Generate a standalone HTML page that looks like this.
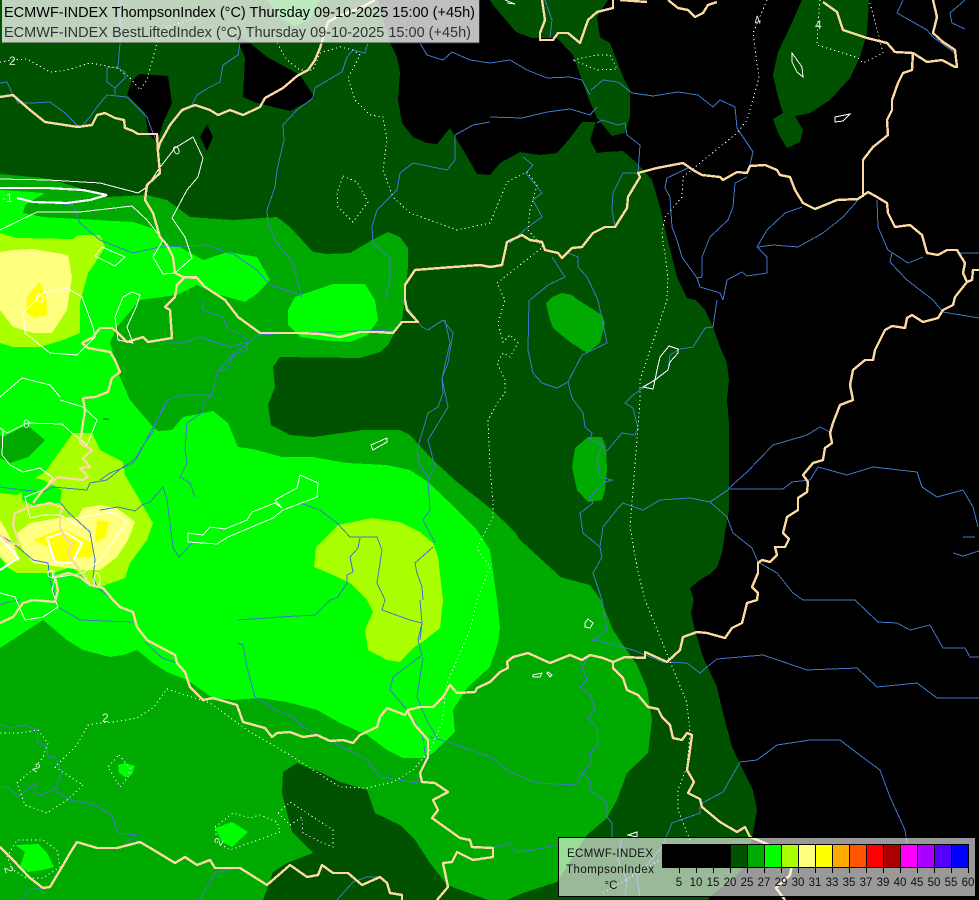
<!DOCTYPE html>
<html><head><meta charset="utf-8"><style>
html,body{margin:0;padding:0;background:#000;width:979px;height:900px;overflow:hidden}
svg{display:block;shape-rendering:crispEdges}
.t{fill:none;stroke:#fbd9a0;stroke-width:2.4;stroke-linejoin:round}
.r{fill:none;stroke:#4078c8;stroke-width:1}
.w{fill:none;stroke:#fff;stroke-width:1}
.W{fill:none;stroke:#fff;stroke-width:2.2}
.d{fill:none;stroke:#fff;stroke-width:1;stroke-dasharray:1.2 3}
text{font-family:"Liberation Sans",sans-serif}
.l{font-size:12px;fill:#d8f0d8}
.k{font-size:11.5px;fill:#111;text-anchor:middle}
</style></head><body>
<svg width="979" height="900" viewBox="0 0 979 900" xmlns="http://www.w3.org/2000/svg">
<rect width="979" height="900" fill="#000"/>
<g>
<g fill="#005200">
<polygon points="0,0 378,0 390,43 397,57 400,73 398,100 402,123 413,137 427,143 437,144 450,128 457,140 465,153 477,174 490,175 500,163 520,152 540,155 557,153 570,138 582,122 596,122 590,140 597,153 605,152 623,151 637,163 652,180 660,207 667,237 677,277 687,298 696,300 705,310 713,327 720,347 727,363 729,380 727,400 729,423 729,467 729,510 725,533 722,553 717,567 710,574 700,580 690,588 694,600 691,613 695,630 703,657 717,687 723,713 732,747 743,770 753,790 757,810 753,833 747,863 735,877 710,897 708,900 0,900"/>
<polygon points="490,0 493,5 516,32 532,38 557,38 573,55 588,97 597,118 612,136 625,133 630,117 630,90 623,77 610,43 600,37 597,17 608,0"/>
<polygon points="802,0 790,27 778,52 773,75 778,97 783,113 773,119 778,133 787,148 800,142 803,130 795,116 810,113 830,100 850,78 860,57 867,33 869,0"/>
</g>
<g fill="#000">
<polygon points="132,80 140,74 168,76 172,103 163,123 157,143 148,133 145,113 127,95"/>
<polygon points="207,124 213,137 207,151 200,137"/>
<polygon points="233,33 245,57 243,97 257,103 290,111 315,98 300,75 267,57 250,43"/>
</g>
<g fill="#00aa00">
<polygon points="0,174 43,178 60,182 107,197 147,195 167,200 190,217 233,220 277,217 290,227 313,252 327,254 350,253 372,240 388,232 400,237 408,248 408,267 405,300 402,320 388,345 380,352 360,358 280,357 273,367 275,387 268,405 271,425 290,435 313,437 363,430 400,430 410,435 433,460 457,482 490,508 515,532 520,540 553,570 560,577 590,585 601,600 613,630 637,665 647,688 652,720 648,753 627,773 617,800 607,818 587,835 557,882 523,893 507,900 0,900"/>
<polygon points="267,0 280,18 295,26 310,20 320,0"/>
<polygon points="552,297 562,293 572,295 578,300 602,315 605,323 600,343 587,353 570,342 553,328 549,317 546,303"/>
<polygon points="588,437 602,437 606,447 607,470 605,490 602,500 588,502 577,490 572,467 575,448"/>
</g>
<polygon fill="#005200" points="263,900 273,872 287,863 313,853 292,832 282,793 283,772 297,763 320,772 340,782 367,790 375,813 400,825 415,840 430,863 447,885 488,900"/>
<polygon fill="#005200" points="102,418 106,417 110,421 102,421"/>
<g fill="#00ff00">
<polygon points="0,190 30,192 45,193 25,205 23,213 43,217 133,222 157,230 163,245 180,247 203,260 228,252 257,257 270,280 258,293 245,302 220,295 197,285 177,295 140,300 117,327 110,343 120,377 130,400 153,427 158,431 172,430 183,417 213,411 228,423 238,447 253,449 282,457 313,457 347,463 387,465 410,470 428,482 447,500 477,530 490,550 497,600 500,627 498,643 490,667 467,688 453,710 455,732 433,753 425,758 403,758 387,750 367,735 340,723 317,710 287,702 260,698 233,700 213,698 187,680 167,672 153,663 137,650 123,655 110,657 83,650 67,640 43,620 23,633 0,648"/>
<polygon points="288,310 295,297 333,284 365,284 375,300 378,320 368,335 350,342 320,340 300,337 288,325"/>
<polygon points="118,765 125,763 135,766 132,775 125,777 119,773"/>
<polygon points="15,845 38,844 47,853 54,867 43,870 28,872 20,866 25,852"/>
<polygon points="215,828 232,822 248,832 232,847 222,842"/>
</g>
<polygon fill="#00aa00" points="0,435 3,437 27,425 45,440 28,457 10,463 0,458"/>
<polygon fill="#00aa00" points="103,418 107,418 110,420 103,420"/>
<g fill="#aaff00">
<polygon points="0,233 17,238 73,239 78,235 100,235 105,247 95,263 88,273 80,303 80,333 63,340 40,347 13,347 0,343"/>
<polygon points="338,525 372,518 400,522 420,532 433,543 438,557 443,600 440,628 425,640 413,648 400,662 387,660 368,650 365,630 373,612 367,600 350,583 333,575 314,567 316,547"/>
<polygon points="73,433 92,433 100,450 123,462 125,475 153,523 147,540 130,563 125,578 100,587 95,587 72,567 53,573 17,573 7,567 0,557 0,493 17,495 22,492 22,500 33,505 60,503 62,490 43,480 35,478 45,472"/>
</g>
<g fill="#ffff80">
<polygon points="0,252 13,250 33,249 68,255 72,277 67,310 52,333 33,333 13,327 0,310"/>
<polygon points="17,533 30,523 58,518 78,517 83,508 100,505 117,508 135,522 128,540 117,557 100,570 83,570 60,567 33,563 23,550"/>
<polygon points="0,520 8,533 20,560 7,563 0,557"/>
</g>
<g fill="#ffff00">
<polygon points="39,282 46,295 47,315 35,318 26,313 27,297"/>
<polygon points="33,540 58,530 65,530 93,543 92,557 77,557 72,563 55,560 50,548"/>
<polygon points="97,520 109,522 106,537 95,543"/>
</g>
</g>
<!-- rivers -->
<g class="r">
<polyline points="0,83 7,82 12,93 18,103 33,103 50,102 65,113 80,128 90,117 97,107 107,95 127,97 147,117 153,133 157,143"/>
<polyline points="120,0 120,43 118,67 107,68 107,82 115,88 115,95"/>
<polyline points="118,68 125,72 125,78 115,88"/>
<polyline points="240,43 238,55 223,65 220,82 208,88 197,95 192,105 177,115 170,127"/>
<polyline points="368,43 365,53 353,50 347,57 342,72 328,80 315,88 313,98 297,110 283,125 284,140 277,170 275,187 267,210 268,223 275,240 293,263 297,280 302,297"/>
<polyline points="490,122 473,125 455,135 455,160 447,170 413,163 400,173 397,190 377,210 372,227 373,243 390,258 390,280 385,300"/>
<polyline points="420,43 427,55 443,60 452,52 470,60 490,63 510,60 527,70 547,78 570,77 582,80 590,95"/>
<polyline points="490,117 522,118 547,112 570,109 590,115 597,107"/>
<polyline points="591,90 603,80 618,82 632,93 653,96 678,92 698,95 713,107 720,100 735,107 737,128 753,152 748,173"/>
<polyline points="597,123 602,120 618,125 625,123 627,135 640,145 638,173 623,173 613,193 612,210 615,227"/>
<polyline points="747,177 735,183 733,207 728,220 710,237 702,257 702,277 697,278 700,287 720,293 723,300"/>
<polyline points="690,167 667,178 665,188 670,197 672,227 677,240 682,257 697,278"/>
<polyline points="723,300 727,280 742,272 747,276 767,273 767,257 757,247 767,230 785,213 802,207"/>
<polyline points="758,247 773,245 798,247 823,233 843,217 858,200"/>
<polyline points="877,200 878,227 888,250 908,263 923,257"/>
<polyline points="892,253 890,262 907,280 933,300 943,312 979,318"/>
<polyline points="960,253 979,253"/>
<polyline points="965,0 950,13 952,23 965,29"/>
<polyline points="903,0 897,13 927,30 933,37 955,53 957,65"/>
<polyline points="545,0 552,20 550,37"/>
<polyline points="523,157 533,165 526,173 542,193 533,200 542,217 528,227 510,243"/>
<polyline points="552,257 565,277 548,285 530,300"/>
<polyline points="568,253 578,257 578,267 587,277 598,300 607,343 582,355 568,382 572,398 583,413 585,427 592,433 590,440 603,445 597,460 600,477 612,480 603,483 590,497 593,503 580,513 583,533 600,547 602,557 593,573 602,600 607,630 593,640 603,642 633,650 663,662 687,663 700,673 707,667"/>
<polyline points="529,300 528,350 533,373 542,383 557,388 568,382"/>
<polyline points="717,300 713,327 705,328 693,347 680,349 670,355 668,370 657,378 643,388 633,395 625,403 633,408 638,428 635,435 622,433 605,453"/>
<polyline points="600,547 603,527 618,508 623,503 643,510 660,500 690,498 710,502 728,490"/>
<polyline points="710,502 727,517 733,533 752,548 758,562 777,573 793,593 803,600 855,600 878,622 897,623 910,630 930,625 943,648 965,648 970,657 979,657"/>
<polyline points="728,489 783,489 792,482 810,480 818,467 847,475 873,467 917,472 922,487 937,497 963,490 973,507 978,527"/>
<polyline points="728,489 747,472 773,445 807,435 820,427 830,432"/>
<polyline points="953,553 963,556 979,551"/><polyline points="963,537 975,537"/>
<polyline points="702,803 723,792 740,762 757,760 777,745 810,740 840,740 857,753 880,770 890,797 905,830 907,843"/>
<polyline points="707,667 717,659 763,655 807,670 857,668 877,687 917,683 937,698 979,698"/>
<polyline points="590,655 582,667 587,680 580,687 590,695 595,710 588,718 597,728 598,745 590,753 592,763 582,773 577,785 537,783 510,772 490,757 448,742 430,737"/>
<polyline points="582,773 590,780 590,790 607,803 607,817 612,823 612,837"/>
<polyline points="700,807 700,813 672,823 662,847 637,877 640,897"/>
<polyline points="622,837 618,860 627,880 625,895"/>
<polyline points="557,845 533,850 515,852 510,843 490,848"/>
<polyline points="100,480 110,473 125,467 133,463 142,447 152,433 165,402 180,395 212,395 217,373 232,355 248,343 258,335 293,333 395,330"/>
<polyline points="167,343 183,343 200,337 230,347 248,342 247,350 233,355 228,368 217,372"/>
<polyline points="203,300 203,310 223,317 228,330 238,333 248,340"/>
<polyline points="195,497 190,483 180,477 187,463 185,450 187,423 203,412 203,403 212,395"/>
<polyline points="100,510 118,507 135,511 142,505 150,502 163,487 167,500 173,548 179,557 192,543"/>
<polyline points="0,487 23,490 43,492 53,487 87,490 90,483 107,480 123,467 137,458 153,427 167,403"/>
<polyline points="60,502 68,512 90,532 95,560 93,577 97,587 113,600"/>
<polyline points="0,535 13,543 33,560 48,563 50,580 58,607 80,620 133,622"/>
<polyline points="0,605 8,602 20,600"/>
<polyline points="300,503 320,510 337,523 350,537 377,537 382,550 377,583 385,600 382,610 410,620 422,623 420,640"/>
<polyline points="360,538 358,548 350,557 353,572 347,575 347,583 337,598 330,600 315,615 280,617 237,620"/>
<polyline points="433,547 415,563 417,573 422,587 423,600"/>
<polyline points="402,300 422,327 428,330 443,320 453,333 448,363 442,378 448,407 428,440 435,467 428,480 430,510 423,520 435,543"/>
<polyline points="445,320 450,343 442,378 443,393 438,407 428,413 417,450 420,465 430,480"/>
<polyline points="420,600 422,623 418,640 422,655 393,677 390,690 407,710 422,733 425,753 428,760"/>
<polyline points="423,657 417,697 428,723 437,737"/>
<polyline points="237,643 243,645 247,667 255,697 273,708 293,717 303,727 333,742 353,753 367,760 380,777 417,783 425,760"/>
<polyline points="145,642 162,658 177,663"/>
<polyline points="0,725 12,728 25,725 37,730 38,743 47,747 48,757 55,757 62,773 55,790 70,800 87,803 100,808 112,815 118,833 137,835 125,843"/>
<polyline points="0,788 8,787 18,797 33,785 38,783 33,793 42,795 53,790"/>
<polyline points="23,900 27,890 43,888"/>
<polyline points="200,900 215,873 240,867"/>
<polyline points="337,900 353,882 367,877 380,877"/>
<polyline points="20,200 73,205 80,223 100,240 133,253 160,247 207,245 235,255 257,270 270,285 300,295"/>
</g>
<!-- dotted contours -->
<g class="d">
<polyline points="0,62 13,60 27,59 50,72 67,70 90,63 117,68 130,78 140,90 147,80 157,43 167,27 200,17"/>
<polyline points="277,43 287,60 300,70 313,70 320,53 340,47 353,50 360,55 348,78 355,100 370,115 383,117 387,140 383,170 393,197 410,213 457,230 490,223 507,182 527,172 537,185 530,210 528,230 543,247 530,257 497,283 505,300 498,323 503,342 510,335 518,343 510,357 503,353 497,363 505,380 505,393 498,402 488,420 490,467 493,503 493,517 477,548 490,567 477,600 470,630 447,683 442,723 430,750 413,770 393,782 367,788 340,787 313,770 290,755 250,732 210,703 167,689 153,708 137,718 113,722 100,723 88,725 77,745 62,760 55,767 83,785 67,800 47,813 25,805 17,783 35,768 43,757 48,743 38,730 20,733 0,733"/>
<polygon points="343,176 357,182 368,202 353,222 338,207 337,193"/>
<polygon points="119,755 130,768 128,777 120,787 108,767"/>
<polygon points="7,857 17,840 43,840 57,850 60,867 43,878 27,878 13,870"/>
<polygon points="215,827 233,813 250,818 260,815 277,822 280,832 230,850 217,842"/>
<polygon points="278,813 290,802 333,830 333,847 323,843 303,833 302,817 290,825"/>
<polygon points="573,60 597,55 610,55 617,69 597,70"/>
<polyline points="767,0 753,33 759,78 747,120 737,133 700,163 683,177 682,197 665,217 662,233 668,277 667,300 640,380 640,400 638,427 630,527 637,567 645,600 687,703 690,733 687,767 678,790 678,810 690,840"/>
<polyline points="820,0 818,23 817,45 843,53 858,58 863,63 883,53 878,33 870,3"/>
<polyline points="603,893 660,860"/>
</g>
<!-- solid contours -->
<g class="w">
<polyline points="0,179 48,180 100,183 138,193 147,187 158,170 175,148 193,137 203,158 198,177 187,190 172,218 185,237 192,258 175,273 163,274 153,257 163,240 147,220 132,206 80,212 37,212 0,230"/>
<polygon points="95,256 102,247 125,257 115,266"/>
<polygon points="67,288 82,297 93,327 95,337 77,355 50,353 25,333 23,313 43,293"/>
<ellipse cx="40" cy="298" rx="3.5" ry="4"/>
<polygon points="132,292 140,295 137,305 127,327 133,343 118,340 115,317 123,297"/>
<polyline points="0,397 22,378 50,385 60,397"/>
<polyline points="0,428 7,433 27,423 62,424 72,433 87,445 97,420 83,407 60,400"/>
<polyline points="3,430 2,455 10,465 23,472 40,468 53,478 43,490 25,497 30,518 43,515 60,515 82,527"/>
<polyline points="77,518 113,512 127,522 100,560 83,573 53,578 52,572"/>
<polyline points="55,578 52,590 58,607 43,617 25,620 15,597 0,593"/>
<ellipse cx="97" cy="580" rx="3" ry="7"/><ellipse cx="51" cy="574" rx="3" ry="3.5"/>
<polygon points="188,533 203,535 210,527 225,529 247,520 252,512 275,503 282,508 275,500 297,488 300,475 318,483 317,497 283,510 273,518 228,537 217,544 188,542"/>
<polygon points="371,445 387,438 387,442 373,450"/>
<polygon points="669,346 678,349 678,353 670,362 668,370 655,380 653,389 643,387 655,380 657,370 660,357"/>
<polygon points="792,53 802,67 803,77 797,72 792,62"/>
<polygon points="835,117 850,114 843,121 835,122"/>
<polygon points="585,623 588,619 593,623 590,628 585,627"/>
<polygon points="533,675 542,673 540,677 533,677"/>
<polygon points="548,672 552,675 550,677 547,673"/>
<polygon points="628,835 637,832 637,837"/>
<polyline points="505,0 515,4 507,3"/>
</g>
<g class="W">
<polyline points="0,188 47,188 83,190 107,195 90,200 67,203 33,202 17,198"/>
<polygon points="47,538 65,532 82,543 72,563 55,562"/>
<polyline points="0,537 18,558 0,570"/>
</g>
<!-- borders -->
<g class="t">
<polyline points="0,97 13,95 22,103 30,110 45,122 78,127 92,125 97,115 105,113 115,118 124,120 125,128 133,131 138,134 157,134 158,152 160,173 147,185 145,200 153,213 160,237 167,245 173,257 175,273 183,277 197,278 205,287 225,300 238,317 260,333 280,333 300,333 320,334 340,337 360,332 377,332 393,333 402,322 418,322 407,310 405,300 405,285 415,270 440,268 480,265 490,267 502,265 507,242 522,235 530,240 542,242 545,250 558,253 562,258 572,248 582,247 593,233 605,227 615,227 627,208 628,197 640,177 638,173 657,168 683,163 693,170 702,175 720,177 723,180 737,172 747,173 750,166 765,165 777,170 780,175 790,177 795,190 803,203 815,209 837,200 858,199 868,192 877,197 887,203 888,213 895,227 910,225 922,235 927,253 938,255 947,250 957,250 965,263 963,273 967,282 955,297 953,305 943,310 938,318 923,322 912,315 907,318 905,328 892,326 885,330 875,350 873,360 865,360 853,370 850,385 853,400 840,405 833,423 830,433 832,443 825,448 823,460 813,463 803,475 808,482 807,492 798,498 798,510 787,517 783,533 789,539 785,547 775,547 777,555 770,562 762,560 758,563 758,573 752,587 758,593 757,600 747,603 742,623 732,628 725,638 707,633 697,632 683,637 680,650 667,662 645,652 645,658 625,657 613,662 603,658 590,655 582,660 570,655 550,663 528,653 513,657 507,662 508,668 500,672 490,682 477,688 475,692 457,693 450,685 443,697 433,707 420,707 408,710 405,715 387,708 380,717 377,727 360,735 353,743 343,740 330,741 317,735 303,737 290,732 277,733 272,737 265,728 243,722 237,705 213,698 203,700 190,687 185,672 177,663 175,655 147,640 137,627 133,612 120,607 113,600 103,588 90,585 80,577 68,573 55,577 58,590 55,602 33,600 23,603 13,617 0,623"/>
<polyline points="158,150 160,143 170,125 182,110 195,105 210,110 218,115 230,110 243,115 260,107 265,98 283,88 297,76 308,70 315,60 320,48 328,22 337,17 360,8 375,0"/>
<polyline points="90,585 80,570 72,560 68,552 73,543 67,541 60,528 60,513 63,508 50,503 30,507 15,513 13,525 18,540 20,545 7,542 0,535"/>
<polyline points="33,503 43,490 58,477 83,480 88,477 80,468 90,467 83,458 92,450 80,443 85,410 83,398 95,397 108,392 112,378 120,372 115,360 110,352 88,348 82,343 93,337 100,328 112,328 117,332 127,342 140,338 143,337 148,342 172,338 170,310 165,307 175,297 177,285 185,277 197,277"/>
<polyline points="863,197 863,160 873,147 888,135 887,120 892,110 892,100 898,83 903,73 912,70 913,53"/>
<polyline points="823,2 837,12 843,30 867,38 887,43 895,52 913,53 927,62 942,60 955,67 958,67"/>
<polyline points="933,0 937,17 933,33 943,42 955,50 957,67"/>
<polyline points="967,282 972,280 973,270 979,270"/>
<polyline points="668,0 678,8 688,10 695,17 703,13 708,5 717,2"/>
<polyline points="542,0 545,20 540,33 540,40 553,40 558,33 568,33 580,43 588,20 597,12 613,8 613,0"/>
<polyline points="620,0 647,2"/>
<polyline points="613,662 613,668 623,678 627,690 638,695 648,707 658,709 662,717 670,725 673,738 682,740 687,733 692,735 689,757 687,770 694,782 688,793 700,799 702,807 720,822 737,832 745,827 750,837 765,843 780,850 793,860 790,875 776,888 785,900"/>
<polyline points="0,847 13,860 30,878 43,888 50,887 62,867 70,853 77,842 97,848 117,848 140,842 157,852 175,863 185,857 197,865 210,860 215,868 240,868 267,885 290,865 307,877 318,875 322,865 333,873 348,873 362,885 380,877 387,883 390,893 402,895 402,900"/>
<polyline points="407,710 415,725 428,740 428,757 420,773 422,782 435,783 448,792 433,800 438,810 432,818 460,838 470,840 472,847 493,848 493,857 473,860 457,852 452,862 443,863 448,887 437,900"/>
</g>
<!-- labels -->
<g class="l">
<text x="9" y="65">2</text>
<text x="173" y="154" transform="rotate(-25 177 150)">0</text>
<text x="2" y="202">-1</text>
<text x="23" y="428">0</text>
<text x="102" y="722">2</text>
<text x="33" y="772" transform="rotate(30 37 768)">2</text>
<text x="5" y="874" transform="rotate(70 9 870)">2</text>
<text x="215" y="845" transform="rotate(-60 219 841)">2</text>
<text x="754" y="24" transform="rotate(-20 758 20)">4</text>
<text x="815" y="29">4</text>
</g>
<!-- header -->
<rect x="1.5" y="-1" width="478" height="44" fill="#fff" fill-opacity=".75" stroke="#333" stroke-width="1"/>
<text x="4" y="17" font-size="14.5" fill="#000" textLength="471" lengthAdjust="spacingAndGlyphs">ECMWF-INDEX ThompsonIndex (°C) Thursday 09-10-2025 15:00 (+45h)</text>
<text x="4" y="37" font-size="14.5" fill="#333" textLength="467" lengthAdjust="spacingAndGlyphs">ECMWF-INDEX BestLiftedIndex (°C) Thursday 09-10-2025 15:00 (+45h)</text>
<!-- legend -->
<rect x="558.5" y="837.5" width="417" height="59" fill="#fff" fill-opacity=".6" stroke="#000" stroke-width="1"/>
<g>
<rect x="662" y="844" width="306" height="23" fill="#000"/>
<rect x="730" y="844" width="17" height="23" fill="#005200"/>
<rect x="747" y="844" width="17" height="23" fill="#00aa00"/>
<rect x="764" y="844" width="17" height="23" fill="#00ff00"/>
<rect x="781" y="844" width="17" height="23" fill="#aaff00"/>
<rect x="798" y="844" width="17" height="23" fill="#ffff80"/>
<rect x="815" y="844" width="17" height="23" fill="#ffff00"/>
<rect x="832" y="844" width="17" height="23" fill="#ffaa00"/>
<rect x="849" y="844" width="17" height="23" fill="#ff5500"/>
<rect x="866" y="844" width="17" height="23" fill="#ff0000"/>
<rect x="883" y="844" width="17" height="23" fill="#aa0000"/>
<rect x="900" y="844" width="17" height="23" fill="#ff00ff"/>
<rect x="917" y="844" width="17" height="23" fill="#aa00ff"/>
<rect x="934" y="844" width="17" height="23" fill="#5500ff"/>
<rect x="951" y="844" width="17" height="23" fill="#0000ff"/>
<path fill="none" stroke="#000" stroke-width="1" d="M662.5 844.5H968.5V867.5H662.5ZM679.5 844V873M696.5 844V873M713.5 844V873M730.5 844V873M747.5 844V873M764.5 844V873M781.5 844V873M798.5 844V873M815.5 844V873M832.5 844V873M849.5 844V873M866.5 844V873M883.5 844V873M900.5 844V873M917.5 844V873M934.5 844V873M951.5 844V873M968.5 844V873"/>
</g>
<text x="610" y="857" font-size="11.5" fill="#111" text-anchor="middle" textLength="86">ECMWF-INDEX</text>
<text x="610" y="873" font-size="11.5" fill="#111" text-anchor="middle" textLength="88">ThompsonIndex</text>
<text x="611" y="889" font-size="11.5" fill="#111" text-anchor="middle">°C</text>
<g class="k">
<text x="679" y="886">5</text><text x="696" y="886">10</text><text x="713" y="886">15</text><text x="730" y="886">20</text><text x="747" y="886">25</text><text x="764" y="886">27</text><text x="781" y="886">29</text><text x="798" y="886">30</text><text x="815" y="886">31</text><text x="832" y="886">33</text><text x="849" y="886">35</text><text x="866" y="886">37</text><text x="883" y="886">39</text><text x="900" y="886">40</text><text x="917" y="886">45</text><text x="934" y="886">50</text><text x="951" y="886">55</text><text x="968" y="886">60</text>
</g>
</svg>
</body></html>
